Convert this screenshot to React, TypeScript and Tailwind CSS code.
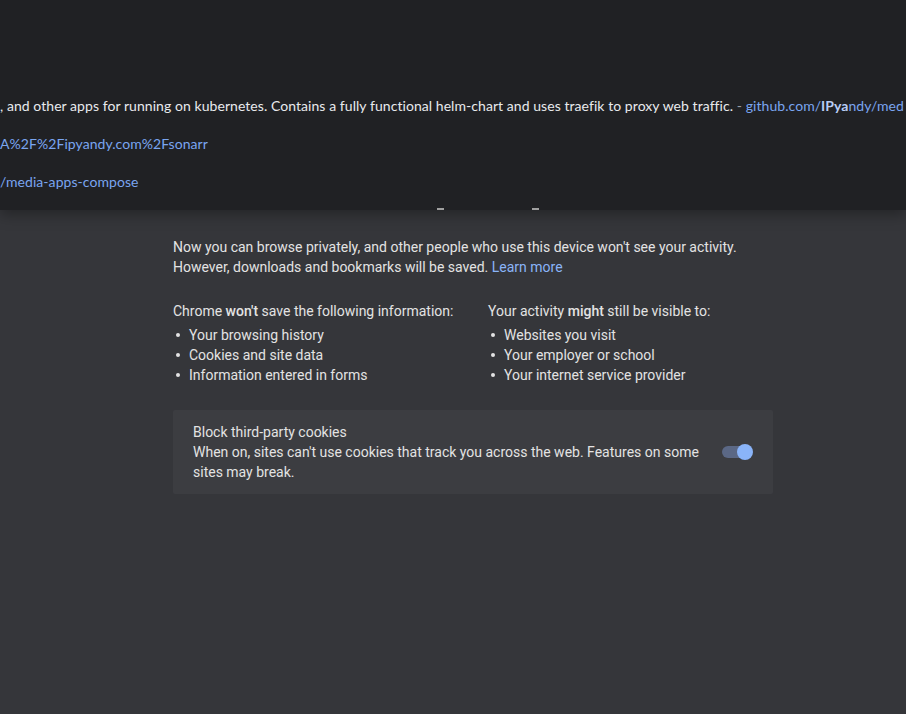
import React from "react";

function Item({ t }: { t: string }) {
  return (
    <li className="flex items-center">
      <span className="w-[16px] pl-[3px] flex items-center">
        <span className="w-[4px] h-[4px] rounded-full bg-[#e3e3e3]" />
      </span>
      <span>{t}</span>
    </li>
  );
}

export default function App() {
  return (
    <div className="relative w-[906px] h-[714px] overflow-hidden bg-[#35363a]" style={{ fontFamily: "Roboto, 'Noto Sans', sans-serif" }}>
      {/* incognito page content */}
      <div className="pt-[237px] pl-[173px]">
        <div className="w-[600px] text-[14px] leading-[20px] text-[#e3e3e3]">
          <p>
            Now you can browse privately, and other people who use this device won't see your activity.
            <br />
            However, downloads and bookmarks will be saved. <span className="text-[#8ab4f8]">Learn more</span>
          </p>
          <div className="mt-[24px] flex">
            <div className="w-[315px]">
              <div>Chrome <span className="font-medium">won't</span> save the following information:</div>
              <ul className="mt-[4px]">
                {["Your browsing history", "Cookies and site data", "Information entered in forms"].map((t) => (
                  <Item key={t} t={t} />
                ))}
              </ul>
            </div>
            <div>
              <div>Your activity <span className="font-medium">might</span> still be visible to:</div>
              <ul className="mt-[4px]">
                {["Websites you visit", "Your employer or school", "Your internet service provider"].map((t) => (
                  <Item key={t} t={t} />
                ))}
              </ul>
            </div>
          </div>
          <div className="mt-[25px] h-[84px] bg-[#3c3d41] rounded-[2px] flex items-center pl-[20px] pr-[20px]">
            <div className="flex-1">
              <div>Block third-party cookies</div>
              <div className="w-[520px]">When on, sites can't use cookies that track you across the web. Features on some sites may break.</div>
            </div>
            <div className="relative w-[32px] h-[18px] flex items-center">
              <div className="ml-[1px] w-[28px] h-[12px] rounded-full bg-[#5b6885]" />
              <div className="absolute right-[0px] w-[16px] h-[16px] rounded-full bg-[#8ab4f8]" />
            </div>
          </div>
        </div>
      </div>

      {/* tooltip overlay */}
      <div className="absolute left-0 top-0 w-[906px] h-[210px] bg-[#202124] shadow-[0_4px_14px_rgba(0,0,0,0.35)] overflow-hidden" style={{ fontFamily: "Lato, 'Noto Sans', sans-serif" }}>
        <div className="pt-[96px] text-[14px] leading-[20px] whitespace-nowrap tracking-[0.06px]">
          <div className="h-[38px] text-[#e8eaed]">
            , and other apps for running on kubernetes. Contains a fully functional helm-chart and uses traefik to proxy web traffic.{" "}
            <span className="text-[#9aa0a6]">-</span>{" "}
            <span className="text-[#7aa5f0]">github.com/<b className="text-[#b9cdf5]">IPya</b>ndy/med</span>
          </div>
          <div className="h-[38px] text-[#7aa5f0]">A%2F%2Fipyandy.com%2Fsonarr</div>
          <div className="h-[20px] text-[#7aa5f0]">/media-apps-compose</div>
        </div>
        <div className="absolute left-[437px] top-[208px] w-[7px] h-[2px] bg-[#a0a0a0]" />
        <div className="absolute left-[532px] top-[208px] w-[7px] h-[2px] bg-[#a0a0a0]" />
      </div>
    </div>
  );
}
